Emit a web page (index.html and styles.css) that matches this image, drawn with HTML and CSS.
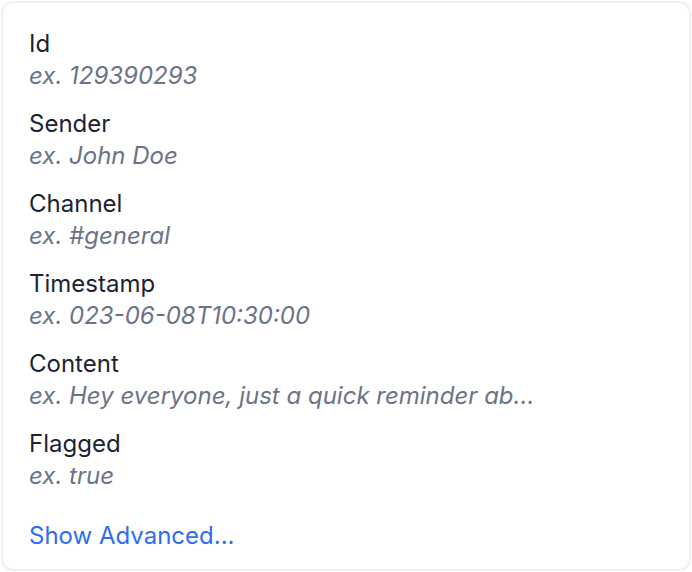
FILE: index.html
```html
<!DOCTYPE html>
<html lang="en">
<head>
    <meta charset="UTF-8">
    <meta name="viewport" content="width=device-width, initial-scale=1.0">
    <title>Message Fields</title>
    <link rel="stylesheet" href="styles.css">
</head>
<body>
    <div class="card">
        <ul class="field-list">
            <li class="field">
                <span class="field-name">Id</span>
                <span class="field-example">ex. 129390293</span>
            </li>
            <li class="field">
                <span class="field-name">Sender</span>
                <span class="field-example">ex. John Doe</span>
            </li>
            <li class="field">
                <span class="field-name">Channel</span>
                <span class="field-example">ex. #general</span>
            </li>
            <li class="field">
                <span class="field-name">Timestamp</span>
                <span class="field-example">ex. 023-06-08T10:30:00</span>
            </li>
            <li class="field">
                <span class="field-name">Content</span>
                <span class="field-example">ex. Hey everyone, just a quick reminder ab...</span>
            </li>
            <li class="field">
                <span class="field-name">Flagged</span>
                <span class="field-example">ex. true</span>
            </li>
        </ul>
        <a class="show-advanced" href="#">Show Advanced...</a>
    </div>
</body>
</html>
```

FILE: styles.css
```css
body {
    margin: 0;
    padding: 1px;
    background-color: #fff;
    font-family: Inter, "Noto Sans", sans-serif;
    font-size: 24px;
    line-height: 32px;
}
.card {
    box-sizing: border-box;
    height: 570px;
    border: 2px solid #f0f0f4;
    border-radius: 12px;
    padding: 25px 26px 16px;
    display: flex;
    flex-direction: column;
}
.field-list {
    list-style-type: none;
    margin: 0;
    padding: 0;
    display: flex;
    flex-direction: column;
    gap: 16px;
}
.field {
    display: flex;
    flex-direction: column;
}
.field-name {
    color: #1b2333;
}
.field-example {
    color: #6b7385;
    font-style: italic;
}
.show-advanced {
    margin-top: 28px;
    align-self: flex-start;
    color: #2f6cf3;
    text-decoration: none;
}
```
